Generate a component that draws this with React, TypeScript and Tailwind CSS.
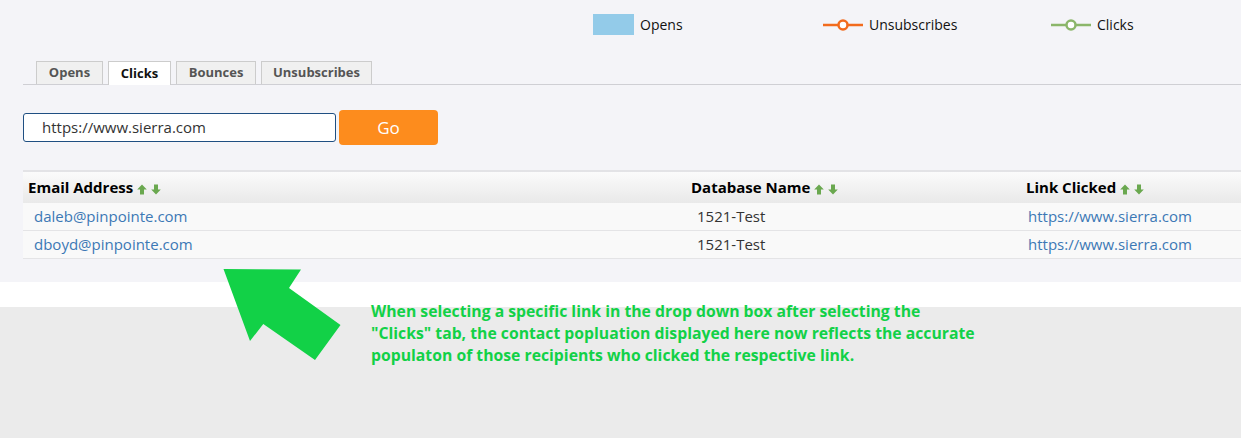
import React from "react";

const SortArrows = () => (
  <span className="inline-flex items-center gap-[4px] ml-[4px] translate-y-[2px]">
    <svg width="10" height="11" viewBox="0 0 10 11">
      <path d="M5 0.5 L9.8 5.5 L7 5.5 L7 10.5 L3 10.5 L3 5.5 L0.2 5.5 Z" fill="#6aa84f" />
    </svg>
    <svg width="10" height="11" viewBox="0 0 10 11">
      <path d="M5 10.5 L9.8 5.5 L7 5.5 L7 0.5 L3 0.5 L3 5.5 L0.2 5.5 Z" fill="#6aa84f" />
    </svg>
  </span>
);

const LineMarker = ({ color }: { color: string }) => (
  <svg width="40" height="14" viewBox="0 0 40 14">
    <line x1="0" y1="7" x2="40" y2="7" stroke={color} strokeWidth="2.5" />
    <circle cx="20" cy="7" r="4.5" fill="#fff" stroke={color} strokeWidth="2.5" />
  </svg>
);

export default function App() {
  const rows = [
    { email: "daleb@pinpointe.com", db: "1521-Test", link: "https://www.sierra.com" },
    { email: "dboyd@pinpointe.com", db: "1521-Test", link: "https://www.sierra.com" },
  ];
  return (
    <div
      className="relative w-full h-[438px] bg-[#ebebeb] overflow-hidden"
      style={{ fontFamily: '"Open Sans", "Noto Sans", sans-serif' }}
    >
      <div className="bg-[#f4f4f8] h-[282px] flex flex-col">
        {/* legend */}
        <div className="flex items-center h-[49px] text-[14px] text-[#111]">
          <div className="flex items-center ml-[593px] w-[230px]">
            <div className="w-[41px] h-[21px] bg-[#93cbe9]" />
            <span className="ml-[6px]">Opens</span>
          </div>
          <div className="flex items-center w-[228px]">
            <LineMarker color="#f26b1d" />
            <span className="ml-[6px]">Unsubscribes</span>
          </div>
          <div className="flex items-center">
            <LineMarker color="#8bb66a" />
            <span className="ml-[6px]">Clicks</span>
          </div>
        </div>
        {/* tabs */}
        <div className="ml-[23px] mt-[12px] border-b border-[#cfcfd4] flex items-end pl-[13px] gap-[5px] h-[24px]">
          <div className="h-[23px] w-[67px] flex items-center justify-center bg-[#f0f0f0] border border-b-0 border-[#cccccc] text-[13px] font-bold text-[#555]">
            Opens
          </div>
          <div className="h-[24px] -mb-px w-[63px] flex items-center justify-center bg-white border border-b-0 border-[#cccccc] text-[13px] font-bold text-[#111]">
            Clicks
          </div>
          <div className="h-[23px] w-[80px] flex items-center justify-center bg-[#f0f0f0] border border-b-0 border-[#cccccc] text-[13px] font-bold text-[#555]">
            Bounces
          </div>
          <div className="h-[23px] w-[111px] flex items-center justify-center bg-[#f0f0f0] border border-b-0 border-[#cccccc] text-[13px] font-bold text-[#555]">
            Unsubscribes
          </div>
        </div>
        {/* filter */}
        <div className="ml-[23px] mt-[25px] flex items-center gap-[3px]">
          <div className="w-[313px] h-[29px] bg-white border border-[#1f4f82] rounded-[3px] flex items-center pl-[18px] text-[15px] text-[#333]">
            https://www.sierra.com
          </div>
          <div className="w-[99px] h-[35px] bg-[#fd8c1d] rounded-[4px] flex items-center justify-center text-white text-[17px]">
            Go
          </div>
        </div>
        {/* table */}
        <div className="ml-[23px] mt-[25px]">
          <div className="h-[33px] border-t-2 border-[#e3e3e6] bg-gradient-to-b from-[#fbfbfb] to-[#e9e9e9] flex items-center text-[15px] font-bold text-black">
            <div className="w-[668px] pl-[5px] flex items-center">
              Email Address
              <SortArrows />
            </div>
            <div className="w-[335px] flex items-center">
              Database Name
              <SortArrows />
            </div>
            <div className="flex items-center">
              Link Clicked
              <SortArrows />
            </div>
          </div>
          {rows.map((r, i) => (
            <div
              key={i}
              className="h-[28px] bg-[#f9f9f9] border-b border-[#e4e4e6] flex items-center text-[15px]"
            >
              <div className="w-[663px] pl-[11px] text-[#3c78b5]">{r.email}</div>
              <div className="w-[342px] pl-[11px] text-[#333]">{r.db}</div>
              <div className="text-[#3c78b5]">{r.link}</div>
            </div>
          ))}
        </div>
      </div>
      <div className="h-[25px] bg-white" />
      <div className="pl-[371px] -mt-[7px] text-[15.75px] font-bold text-[#12d147] leading-[22px]">
        <p className="w-[700px]">
          When selecting a specific link in the drop down box after selecting the
          <br />
          "Clicks" tab, the contact popluation displayed here now reflects the accurate
          <br />
          populaton of those recipients who clicked the respective link.
        </p>
      </div>
      <svg
        className="absolute left-0 top-0 pointer-events-none"
        width="1241"
        height="438"
        viewBox="0 0 1241 438"
      >
        <polygon
          points="223.5,269 301,269.5 289,288 340.5,325 315,360 263.3,324 250,341"
          fill="#12d147"
        />
      </svg>
    </div>
  );
}
